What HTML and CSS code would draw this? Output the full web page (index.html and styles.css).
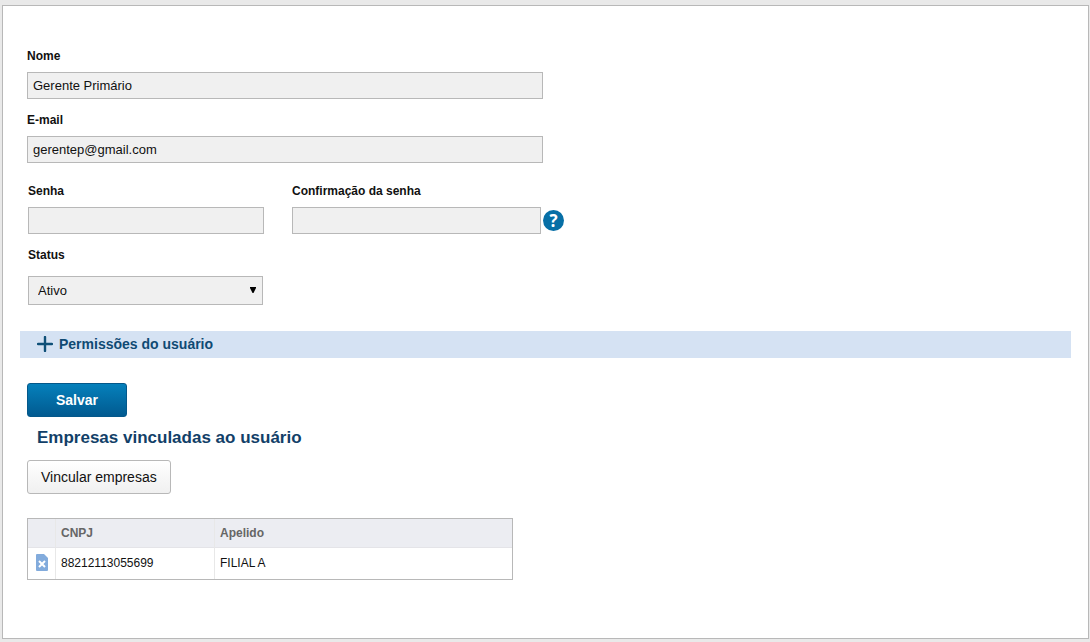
FILE: index.html
```html
<!DOCTYPE html>
<html lang="pt-BR">
<head>
    <meta charset="UTF-8">
    <meta name="viewport" content="width=device-width, initial-scale=1.0">
    <title>Usuário</title>
    <link rel="stylesheet" href="styles.css">
</head>
<body>
    <main class="panel">
        <form class="user-form">
            <div class="fields">
                <div class="field">
                    <label for="nome">Nome</label>
                    <input type="text" id="nome" value="Gerente Primário">
                </div>
                <div class="field">
                    <label for="email">E-mail</label>
                    <input type="text" id="email" value="gerentep@gmail.com">
                </div>
            </div>

            <div class="access">
                <div class="field field-senha">
                    <label for="senha">Senha</label>
                    <input type="password" id="senha">
                </div>
                <div class="field field-confirma">
                    <label for="confirma">Confirmação da senha</label>
                    <div class="with-help">
                        <input type="password" id="confirma">
                        <button type="button" class="help" aria-label="Ajuda">?</button>
                    </div>
                </div>
                <div class="field field-status">
                    <label for="status">Status</label>
                    <div class="select-box">
                        <select id="status">
                            <option selected>Ativo</option>
                            <option>Inativo</option>
                        </select>
                        <svg class="arrow" width="6" height="6" viewBox="0 0 6 6"><path d="M0 0h6v1L3.500 6h-1L0 1z"/></svg>
                    </div>
                </div>
            </div>

            <button type="button" class="section-toggle">
                <svg width="16" height="16" viewBox="0 0 16 16"><path d="M8 1v14M1 8h14" stroke="#0f5078" stroke-width="2.400" stroke-linecap="round"/></svg>
                Permissões do usuário
            </button>

            <button type="submit" class="btn btn-primary">Salvar</button>
        </form>

        <section class="companies">
            <h2>Empresas vinculadas ao usuário</h2>
            <button type="button" class="btn btn-default">Vincular empresas</button>

            <table class="grid">
                <thead>
                    <tr>
                        <th class="col-action"></th>
                        <th class="col-cnpj">CNPJ</th>
                        <th>Apelido</th>
                    </tr>
                </thead>
                <tbody>
                    <tr>
                        <td class="col-action">
                            <button type="button" class="remove" aria-label="Desvincular">
                                <svg width="12" height="17" viewBox="0 0 12 17">
                                    <path d="M1 0h7l4 4v12a1 1 0 0 1-1 1H1a1 1 0 0 1-1-1V1a1 1 0 0 1 1-1z" fill="#82abdc"/>
                                    <path d="M3 7l6 6M9 7l-6 6" stroke="#fff" stroke-width="2"/>
                                </svg>
                            </button>
                        </td>
                        <td>88212113055699</td>
                        <td>FILIAL A</td>
                    </tr>
                </tbody>
            </table>
        </section>
    </main>
</body>
</html>
```
FILE: styles.css
```css
* {
    box-sizing: border-box;
}

body {
    margin: 0;
    padding: 5px 1px 3px 2px;
    background: #e9e9e9;
    color: #111;
    font-family: "Liberation Sans", Arial, sans-serif;
    font-size: 13px;
}

input, select, button {
    font-family: inherit;
    color: inherit;
}

.panel {
    background: #fff;
    border: 1px solid #b8b8b8;
    padding: 42px 17px 58px;
}

/* Form fields */
.fields {
    max-width: 523px;
    padding-left: 7px;
}

.field label {
    display: block;
    margin-bottom: 8px;
    font-size: 12px;
    font-weight: bold;
    line-height: 16px;
}

.field + .field {
    margin-top: 13px;
}

.field input {
    display: block;
    width: 100%;
    height: 27px;
    padding: 0 5px;
    background: #f0f0f0;
    border: 1px solid #b8b8b8;
    border-radius: 0;
    font-size: 13px;
}

.access {
    display: grid;
    grid-template-columns: 236px 272px;
    gap: 13px 28px;
    margin-top: 20px;
    padding-left: 8px;
}

.access .field {
    margin-top: 0;
}

.with-help {
    display: flex;
    align-items: center;
    gap: 2px;
}

.help {
    flex: none;
    width: 21px;
    height: 21px;
    padding: 0;
    background: #076fa6;
    border: 0;
    border-radius: 50%;
    color: #fff;
    font-family: "Open Sans", sans-serif;
    font-size: 17px;
    font-weight: bold;
    line-height: 21px;
}

.field-status label {
    margin-bottom: 13px;
}

.select-box {
    position: relative;
    width: 235px;
}

.field select {
    display: block;
    width: 100%;
    height: 29px;
    padding: 0 9px;
    appearance: none;
    background: #f0f0f0;
    border: 1px solid #b8b8b8;
    border-radius: 0;
    font-size: 13px;
}

.arrow {
    position: absolute;
    top: 11px;
    right: 7px;
    fill: #000;
    pointer-events: none;
}

/* Permissions bar */
.section-toggle {
    display: flex;
    align-items: center;
    gap: 6px;
    width: 100%;
    height: 27px;
    margin: 26px 0 25px;
    padding: 0 17px 1px;
    background: #d5e2f3;
    border: 0;
    color: #0f4a73;
    font-size: 14px;
    font-weight: bold;
}

/* Buttons */
.btn {
    display: block;
    height: 34px;
    margin-left: 7px;
    border-radius: 3px;
    font-size: 14px;
}

.btn-primary {
    width: 100px;
    background: linear-gradient(#0580bb, #015a90);
    border: 1px solid #04588a;
    color: #fff;
    font-weight: bold;
}

.btn-default {
    padding: 0 13px;
    background: linear-gradient(#fff, #f0f0f0);
    border: 1px solid #b8b8b8;
}

/* Linked companies */
.companies h2 {
    margin: 11px 0 12px 17px;
    color: #123f68;
    font-size: 17px;
    line-height: 20px;
}

.grid {
    width: 486px;
    margin: 24px 0 0 7px;
    border: 1px solid #b8b8b8;
    border-spacing: 0;
    table-layout: fixed;
    font-size: 12px;
}

.grid th,
.grid td {
    padding: 0 5px;
    border-right: 1px solid #e8e8e8;
    text-align: left;
}

.grid th {
    height: 29px;
    background: #ecedf2;
    border-bottom: 1px solid #e4e4e8;
    color: #666;
}

.grid td {
    height: 31px;
    padding-bottom: 2px;
}

.grid th:last-child,
.grid td:last-child {
    border-right: 0;
}

.grid .col-action {
    width: 28px;
    padding: 0 0 3px;
    text-align: center;
}

.grid .col-cnpj {
    width: 159px;
}

.remove {
    display: block;
    margin: 0 auto;
    padding: 0;
    background: none;
    border: 0;
}

.remove svg {
    display: block;
}
```
